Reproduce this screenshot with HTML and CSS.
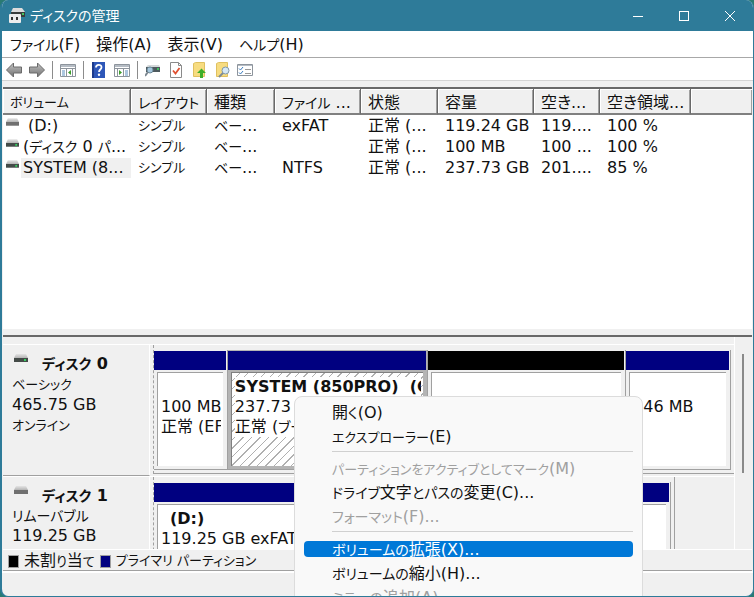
FILE: index.html
```
<!DOCTYPE html>
<html lang="ja">
<head>
    <meta charset="UTF-8">
    <title>ディスクの管理</title>
    <link rel="stylesheet" href="styles.css">
</head>
<body>
<svg class="sprite" aria-hidden="true">
    <defs>
        <linearGradient id="case" x1="0" y1="0" x2="0" y2="1">
            <stop offset="0" stop-color="#e4e4e4"/>
            <stop offset="1" stop-color="#b4b4b4"/>
        </linearGradient>
        <linearGradient id="steel" x1="0" y1="0" x2="0" y2="1">
            <stop offset="0" stop-color="#c4c4c4"/>
            <stop offset="1" stop-color="#6f6f6f"/>
        </linearGradient>
    </defs>
    <symbol id="drive" viewBox="0 0 14 8">
        <path d="M2 0h10l2 4H0z" fill="url(#case)"/>
        <rect y="4" width="14" height="4" fill="#444b48"/>
        <rect x="10" y="5" width="2" height="2" fill="#35d060"/>
    </symbol>
    <symbol id="removable" viewBox="0 0 14 8">
        <path d="M2 0h10l2 4H0z" fill="url(#case)"/>
        <rect y="4" width="14" height="4" fill="#707070"/>
    </symbol>
</svg>
<div class="window">
    <header class="titlebar">
        <svg class="app-icon" width="16" height="16" viewBox="0 0 16 16">
            <path d="M4 0h9l3 4H2z" fill="#dcdcdc"/>
            <path d="M2 4h14v5H2z" fill="#3a3d3c"/>
            <rect x="13" y="5" width="2" height="2" fill="#46c860"/>
            <rect y="6" width="12" height="9" rx="1" fill="#ececec"/>
            <path d="M2 9h2v3H2zM7 9h2v3H7z" fill="#333"/>
        </svg>
        <h1 class="title">ディスクの管理</h1>
        <button class="win-btn" aria-label="最小化"><svg width="10" height="10" viewBox="0 0 10 10"><path d="M0 5.5h10"/></svg></button>
        <button class="win-btn" aria-label="最大化"><svg width="10" height="10" viewBox="0 0 10 10"><rect x=".5" y=".5" width="9" height="9"/></svg></button>
        <button class="win-btn" aria-label="閉じる"><svg width="10" height="10" viewBox="0 0 10 10"><path d="M0 0l10 10M10 0L0 10"/></svg></button>
    </header>
    <nav class="menubar">
        <button><span class="kana">ファイル</span>(F)</button>
        <button>操作(A)</button>
        <button>表示(V)</button>
        <button><span class="kana">ヘルプ</span>(H)</button>
    </nav>
    <div class="toolbar">
        <button aria-label="戻る"><svg viewBox="0 0 16 16"><path d="M.5 8L7.500 1v4h8v6h-8v4z" fill="url(#steel)" stroke="#6b6b6b"/></svg></button>
        <button aria-label="進む"><svg viewBox="0 0 16 16"><path d="M15.500 8L8.500 1v4h-8v6h8v4z" fill="url(#steel)" stroke="#6b6b6b"/></svg></button>
        <span class="sep"></span>
        <button aria-label="コンソール ツリー"><svg viewBox="0 0 16 16"><path d="M.5 2.500h15v12H.5z" fill="#fff" stroke="#8d949c"/><path d="M1 3h14v2H1z" fill="#b5bcc4"/><path d="M1 6.500h14M6.500 7v7M12.500 7v7" stroke="#8d949c"/><path d="M2 9h3M2 11h3M2 13h3" stroke="#5b8fc0"/><path d="M11 8v5L8 10.500z" fill="#3c9c2c"/></svg></button>
        <span class="sep"></span>
        <button aria-label="ヘルプ"><svg viewBox="0 0 16 16"><path d="M1 0h13v16H1z" fill="#2e57b8"/><path d="M1 0h2v16H1z" fill="#1c3a8c"/><path d="M5 5.500C5 2 10.500 2 10.500 5.200 10.500 7.500 8 7.500 8 10" fill="none" stroke="#fff" stroke-width="1.800"/><circle cx="8" cy="12.800" r="1.200" fill="#fff"/></svg></button>
        <button aria-label="操作ウィンドウ"><svg viewBox="0 0 16 16"><path d="M.5 2.500h15v12H.5z" fill="#fff" stroke="#8d949c"/><path d="M1 3h14v2H1z" fill="#b5bcc4"/><path d="M1 6.500h14M3.500 7v7M9.500 7v7" stroke="#8d949c"/><path d="M11 9h3M11 11h3M11 13h3" stroke="#5b8fc0"/><path d="M5 8v5l3-2.500z" fill="#3c9c2c"/></svg></button>
        <span class="sep"></span>
        <button aria-label="最新の情報に更新"><svg viewBox="0 0 16 16"><path d="M3 3h11l1 2H1z" fill="#d4d8da"/><path d="M1 5h14v5H1z" fill="#4e5a5e"/><path d="M12 6h2v2h-2z" fill="#3fc060"/><circle cx="5" cy="8" r="3" fill="#a5c6dc" stroke="#6b8797"/><path d="M3 10l-3 4" stroke="#7b8790" stroke-width="2"/></svg></button>
        <button aria-label="プロパティ"><svg viewBox="0 0 16 16"><path d="M2.500.5h8l3 3v12h-11z" fill="#fff" stroke="#8a8a8a"/><path d="M10.500.5v3h3" fill="none" stroke="#8a8a8a"/><path d="M5 8.500l2.500 3L11.500 6" fill="none" stroke="#e05030" stroke-width="1.800"/></svg></button>
        <button aria-label="上へ"><svg viewBox="0 0 16 16"><path d="M2.500 1.500l2-1h9v14h-11z" fill="#f7dc80" stroke="#dfc060"/><path d="M10.500 6.500L15 11h-3v5H9v-5H6z" fill="#3fae2a"/></svg></button>
        <button aria-label="検索"><svg viewBox="0 0 16 16"><path d="M2.500 1.500l2-1h9v14h-11z" fill="#f7dc80" stroke="#dfc060"/><circle cx="11.500" cy="8.500" r="3.500" fill="#d5e8f5" stroke="#7f97a8"/><path d="M9 11l-4 4" stroke="#7f8c96" stroke-width="2"/></svg></button>
        <button aria-label="表示設定"><svg viewBox="0 0 16 16"><path d="M.5 2.500h15v11H.5z" fill="#fff" stroke="#8d949c"/><path d="M1 3h14v1H1z" fill="#b5bcc4"/><path d="M2 6.500l1.500 1.500L6 5M2 10.500l1.500 1.500L6 9" fill="none" stroke="#3a7cc0"/><path d="M8 7.500h6M8 11.500h6" stroke="#999"/></svg></button>
    </div>
    <section class="volumes">
        <table>
            <colgroup>
                <col class="c-volume"><col class="c-layout"><col class="c-type"><col class="c-fs"><col class="c-state"><col class="c-size"><col class="c-free"><col class="c-pct"><col>
            </colgroup>
            <thead>
                <tr><th><span class="kana-s">ボリューム</span></th><th><span class="kana">レイアウト</span></th><th>種類</th><th><span class="kana">ファイル</span> ...</th><th>状態</th><th>容量</th><th>空き...</th><th>空き領域...</th><th></th></tr>
            </thead>
            <tbody>
                <tr>
                    <td><div class="volume"><svg><use href="#removable"/></svg><span class="label letter">(D:)</span></div></td>
                    <td><span class="kana-s">シンプル</span></td><td><span class="kana">ベー</span>...</td><td>exFAT</td><td>正常 (...</td><td>119.24 GB</td><td>119....</td><td>100 %</td><td></td>
                </tr>
                <tr>
                    <td><div class="volume"><svg><use href="#drive"/></svg><span class="label">(<span class="kana">ディスク</span> 0 <span class="kana">パ</span>...</span></div></td>
                    <td><span class="kana-s">シンプル</span></td><td><span class="kana">ベー</span>...</td><td></td><td>正常 (...</td><td>100 MB</td><td>100 ...</td><td>100 %</td><td></td>
                </tr>
                <tr>
                    <td><div class="volume"><svg><use href="#drive"/></svg><span class="label current">SYSTEM (8...</span></div></td>
                    <td><span class="kana-s">シンプル</span></td><td><span class="kana">ベー</span>...</td><td>NTFS</td><td>正常 (...</td><td>237.73 GB</td><td>201....</td><td>85 %</td><td></td>
                </tr>
            </tbody>
        </table>
    </section>
    <section class="disks">
        <div class="disk-list">
            <div class="disk">
                <div class="disk-info">
                    <h2><svg><use href="#drive"/></svg><span><span class="kana">ディスク</span> 0</span></h2>
                    <p><span class="kana-s">ベーシック</span></p>
                    <p>465.75 GB</p>
                    <p><span class="kana-s">オンライン</span></p>
                </div>
                <div class="parts parts-0">
                    <div class="part"><div class="bar"></div><div class="box"><p>&nbsp;</p><p>100 MB</p><p>正常 (EFI)</p></div></div>
                    <div class="part selected"><div class="bar"></div><div class="box"><p class="name">SYSTEM (850PRO)&nbsp; (C:)</p><p>237.73</p><p>正常 (<span class="kana">ブー</span></p></div></div>
                    <div class="part free"><div class="bar"></div><div class="box"></div></div>
                    <div class="part"><div class="bar"></div><div class="box"><p>&nbsp;</p><p>546 MB</p></div></div>
                </div>
            </div>
            <div class="disk">
                <div class="disk-info">
                    <h2><svg><use href="#removable"/></svg><span><span class="kana">ディスク</span> 1</span></h2>
                    <p><span class="kana">リムーバブル</span></p>
                    <p>119.25 GB</p>
                    <p><span class="kana-s">オンライン</span></p>
                </div>
                <div class="parts parts-1">
                    <div class="part"><div class="bar"></div><div class="box"><p class="name indent">(D:)</p><p>119.25 GB exFAT</p></div></div>
                </div>
            </div>
        </div>
        <div class="scrollbar"><div class="thumb"></div></div>
    </section>
    <div class="legend">
        <span class="key key-free"></span><span>未割<span class="kana-s">り</span>当<span class="kana-s">て</span></span>
        <span class="key key-primary"></span><span class="kana-s">プライマリ パーティション</span>
    </div>
    <footer class="statusbar"></footer>

    <div class="context-menu" role="menu">
        <button role="menuitem">開<span class="kana">く</span>(O)</button>
        <button role="menuitem"><span class="kana-s">エクスプローラー</span>(E)</button>
        <hr>
        <button role="menuitem" disabled><span class="kana-s">パーティションをアクティブとしてマーク</span>(M)</button>
        <button role="menuitem"><span class="kana">ドライブ</span>文字<span class="kana">とパスの</span>変更(C)...</button>
        <button role="menuitem" disabled><span class="kana">フォーマット</span>(F)...</button>
        <hr>
        <button role="menuitem" class="active"><span class="kana">ボリュームの</span>拡張(X)...</button>
        <button role="menuitem"><span class="kana">ボリュームの</span>縮小(H)...</button>
        <button role="menuitem" disabled><span class="kana">ミラーの</span>追加(A)...</button>
    </div>
</div>
</body>
</html>
```
FILE: styles.css
```
* {
    box-sizing: border-box;
}
body {
    margin: 0;
    height: 100vh;
    overflow: hidden;
    background: #2a7a72;
    color: #111;
    font: 16px/20px "DejaVu Sans", "Noto Sans CJK JP", sans-serif;
    font-feature-settings: "palt";
}
h1, h2, p {
    margin: 0;
    font-size: 16px;
}
button {
    border: 0;
    padding: 0;
    background: none;
    color: inherit;
    font: inherit;
    font-feature-settings: inherit;
    white-space: nowrap;
}
/* kana runs are set smaller than kanji and latin */
.kana {
    font-size: 14px;
}
.kana-s {
    font-size: 13px;
}
.sprite {
    position: absolute;
    width: 0;
    height: 0;
}
.window {
    position: relative;
    display: flex;
    flex-direction: column;
    height: 100vh;
    overflow: hidden;
    border: 1px solid #2e7b99;
    border-width: 0 1px 1px 2px;
    border-radius: 8px;
    background: #f0f0f0;
}

/* title bar */
.titlebar {
    flex: none;
    display: flex;
    align-items: center;
    height: 31px;
    padding-left: 7px;
    background: #2e7b99;
    color: #fff;
}
.title {
    flex: 1;
    margin-left: 5px;
    font-size: 14px;
    font-weight: normal;
}
.win-btn {
    width: 46px;
    height: 31px;
}
.win-btn svg {
    fill: none;
    stroke: #fff;
}

/* menu bar and toolbar */
.menubar {
    flex: none;
    display: flex;
    gap: 16px;
    height: 27px;
    padding: 2px 8px 0;
    background: #fff;
    border-bottom: 1px solid #a8a8a8;
}
.toolbar {
    flex: none;
    display: flex;
    align-items: center;
    gap: 7px;
    height: 23px;
    padding: 1px 4px 0;
    background: #fff;
    border-bottom: 1px solid #d4d4d4;
}
.toolbar button,
.toolbar svg {
    display: block;
    width: 16px;
    height: 16px;
}
.toolbar .sep {
    width: 1px;
    height: 18px;
    background: #8c8c8c;
}

/* volume list */
.volumes {
    flex: 239;
    min-height: 0;
    margin: 6px 1px 0;
    border-top: 2px solid #696969;
    border-bottom: 6px solid #f0f0f0;
    background: #fff;
    overflow: hidden;
}
table {
    width: 100%;
    table-layout: fixed;
    border-collapse: separate;
    border-spacing: 0;
}
.c-volume { width: 128px; }
.c-layout { width: 76px; }
.c-type { width: 68px; }
.c-fs { width: 86px; }
.c-state { width: 77px; }
.c-size { width: 96px; }
.c-free { width: 66px; }
.c-pct { width: 91px; }
th, td {
    height: 21px;
    padding: 0 0 0 7px;
    overflow: hidden;
    text-align: left;
    font-weight: normal;
    line-height: 20px;
    white-space: nowrap;
}
th {
    height: 25px;
    padding-top: 3px;
    background: #f0f0f0;
    border-right: 1px solid #696969;
    border-bottom: 2px solid #808080;
    box-shadow: inset 1px 1px #fff, inset -1px 0 #a0a0a0;
}
th:last-child {
    border-right: 0;
}
td:first-child {
    padding: 0;
}
.volume {
    display: flex;
}
.volume svg {
    flex: none;
    width: 13px;
    height: 8px;
    margin: 2px 2px 0 3px;
}
.volume .label {
    flex: 1;
    padding-left: 2px;
}
.volume .letter {
    padding-left: 7px;
}
.volume .current {
    background: #f0f0f0;
}

/* disk map */
.disks {
    flex: 212;
    min-height: 0;
    display: flex;
    margin: 0 1px;
    border-top: 2px solid #696969;
    overflow: hidden;
}
.disk-list {
    flex: 1;
    padding-top: 7px;
    border-right: 1px solid #fff;
}
.disk {
    display: flex;
    height: 132px;
    border-top: 1px solid #fff;
}
.disk-info {
    flex: none;
    width: 147px;
    height: 131px;
    padding: 9px 0 0 9px;
    border-bottom: 1px solid #a0a0a0;
    border-right: 1px solid #fff;
}
.disk-info h2 {
    display: flex;
}
.disk-info svg {
    width: 14px;
    height: 8px;
    margin: 0 14px 0 2px;
}
.parts {
    display: grid;
    height: 129px;
    margin-left: 3px;
    padding: 5px 3px 3px 0;
    border-left: 1px dashed #a0a0a0;
    border-bottom: 1px solid #a0a0a0;
}
.parts-0 {
    flex: 1;
    grid-template-columns: 74fr 200fr 199fr 105fr;
}
.parts-1 {
    width: 89%;
    margin-right: 59px;
    border-right: 1px solid #a0a0a0;
}
.part {
    display: flex;
    flex-direction: column;
    min-width: 0;
    border-right: 1px solid #a0a0a0;
    border-bottom: 1px solid #a0a0a0;
}
.bar {
    height: 19px;
    margin: 1px 1px 0 0;
    background: #000080;
}
.free .bar {
    background: #000;
}
.box {
    flex: 1;
    margin: 2px 4px 3px 3px;
    padding: 4px 2px 0 3px;
    border: solid #a0a0a0;
    border-width: 1px 0 0 1px;
    background: #fff;
    overflow: hidden;
}
.box p {
    overflow: hidden;
    white-space: nowrap;
}
.box .name {
    font-weight: bold;
}
.box .indent {
    padding-left: 9px;
}
.selected {
    background: #b4b4b4;
}
.selected .box {
    border-color: #808080;
    background: repeating-linear-gradient(135deg, #fff 0 5px, #b0b0b0 5px 6px);
}
.selected .box p {
    background: #fff;
}

/* scroll thumb, legend, status */
.scrollbar {
    flex: none;
    width: 17px;
    padding: 17px 8px 0 7px;
}
.thumb {
    height: 119px;
    background: #8a8a8a;
}
.legend {
    flex: none;
    display: flex;
    align-items: center;
    gap: 5px;
    height: 22px;
    margin: 0 1px;
    padding: 2px 0 0 5px;
    border-top: 1px solid #fff;
    border-bottom: 1px solid #a0a0a0;
}
.key {
    width: 11px;
    height: 13px;
    border: 1px solid #a0a0a0;
}
.key-free {
    background: #000;
}
.key-primary {
    background: #000080;
}
.statusbar {
    flex: none;
    height: 25px;
    border-top: 2px solid #fff;
}

/* context menu */
.context-menu {
    position: absolute;
    top: 396px;
    left: 292px;
    width: 349px;
    padding: 4px 9px;
    border: 1px solid #dcdcdc;
    border-radius: 8px;
    background: #f9f9f9;
}
.context-menu button {
    display: block;
    width: 100%;
    height: 24px;
    padding-left: 28px;
    text-align: left;
}
.context-menu button:disabled {
    color: #a0a0a0;
}
.context-menu hr {
    height: 1px;
    margin: 2px 0 5px 28px;
    border: 0;
    background: #d0d0d0;
}
.context-menu .active {
    height: 16px;
    margin: 9px 0 5px;
    border-radius: 4px;
    background: #0078d7;
    color: #fff;
    line-height: 18px;
    overflow: hidden;
}
```
